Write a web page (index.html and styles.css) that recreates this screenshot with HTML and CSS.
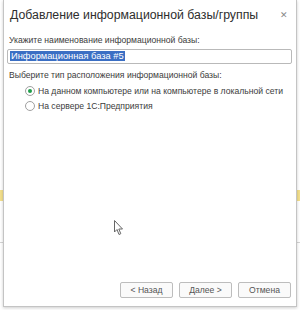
FILE: index.html
```html
<!DOCTYPE html>
<html lang="ru">
<head>
    <meta charset="UTF-8">
    <title>Добавление информационной базы/группы</title>
    <link rel="stylesheet" href="styles.css">
</head>
<body>
    <div class="dialog">
        <div class="header">
            <div class="title">Добавление информационной базы/группы</div>
            <div class="close">&#x2715;</div>
        </div>
        <div class="content">
            <div class="label">Укажите наименование информационной базы:</div>
            <div class="input"><span class="selected">Информационная база #5</span></div>
            <div class="label group">Выберите тип расположения информационной базы:</div>
            <div class="radios">
                <div class="radio-row">
                    <span class="radio checked"></span>
                    <span>На данном компьютере или на компьютере в локальной сети</span>
                </div>
                <div class="radio-row">
                    <span class="radio"></span>
                    <span>На сервере 1С:Предприятия</span>
                </div>
            </div>
            <div class="spacer">
                <svg class="cursor" width="10" height="16" viewBox="0 0 10 16">
                    <path d="M0.5 0.5 L0.5 12 L3 9.5 L5 14.5 L6.8 13.7 L4.8 9 L8.5 9 Z" fill="#fff" stroke="#666" stroke-width="1"/>
                </svg>
            </div>
            <div class="buttons">
                <button class="btn">&lt; Назад</button>
                <button class="btn">Далее &gt;</button>
                <button class="btn">Отмена</button>
            </div>
        </div>
    </div>
</body>
</html>
```

FILE: styles.css
```css
* {
    margin: 0;
    padding: 0;
    box-sizing: border-box;
}

html {
    background: linear-gradient(to bottom, #fff 190px, #f3df8c 190px, #f3df8c 201px, #fff 201px, #fff 242px, #d4d4d4 242px, #d4d4d4 243px, #fff 243px);
}

body {
    font-family: "Liberation Sans", Arial, sans-serif;
    font-size: 8.6px;
    color: #3c3c3c;
    padding: 0 3px;
    height: 310px;
}

.dialog {
    height: 307px;
    background: #fff;
    border: 1px solid #c4c4c4;
    border-top: none;
    box-shadow: 0 1px 3px rgba(0, 0, 0, 0.2);
    display: flex;
    flex-direction: column;
}

.header {
    display: flex;
    align-items: center;
    justify-content: space-between;
    height: 30px;
    padding: 0 8px 0 6px;
}

.title {
    font-size: 12.3px;
    color: #2e2e2e;
}

.close {
    font-size: 9px;
    color: #888;
}

.content {
    flex: 1;
    display: flex;
    flex-direction: column;
    padding: 4px 4px 8px 3px;
}

.label {
    line-height: 12px;
    padding-left: 2px;
}

.group {
    margin-top: 5px;
}

.input {
    margin-top: 3px;
    height: 15px;
    border: 1px solid #b9b9b9;
    border-radius: 2px;
    padding: 0 2px;
    font-size: 9.3px;
    line-height: 13px;
    color: #fff;
}

.selected {
    background: #3b6fc4;
    padding: 0 1px;
}

.radios {
    margin-top: 2px;
    padding-left: 18px;
    display: flex;
    flex-direction: column;
}

.radio-row {
    display: flex;
    align-items: center;
    gap: 3px;
    height: 15px;
}

.radio {
    width: 10px;
    height: 10px;
    border: 1px solid #a0a0a0;
    border-radius: 50%;
    display: flex;
    align-items: center;
    justify-content: center;
}

.radio.checked::after {
    content: '';
    width: 4px;
    height: 4px;
    border-radius: 50%;
    background: #1f9e4a;
}

.spacer {
    flex: 1;
    padding: 107px 0 0 107px;
}

.cursor {
    display: block;
}

.buttons {
    display: flex;
    justify-content: flex-end;
    gap: 6px;
    padding-right: 1px;
}

.btn {
    width: 53px;
    height: 16px;
    font-family: inherit;
    font-size: 8.6px;
    color: #555;
    background: #fafafa;
    border: 1px solid #bdbdbd;
    border-radius: 2px;
}
```
